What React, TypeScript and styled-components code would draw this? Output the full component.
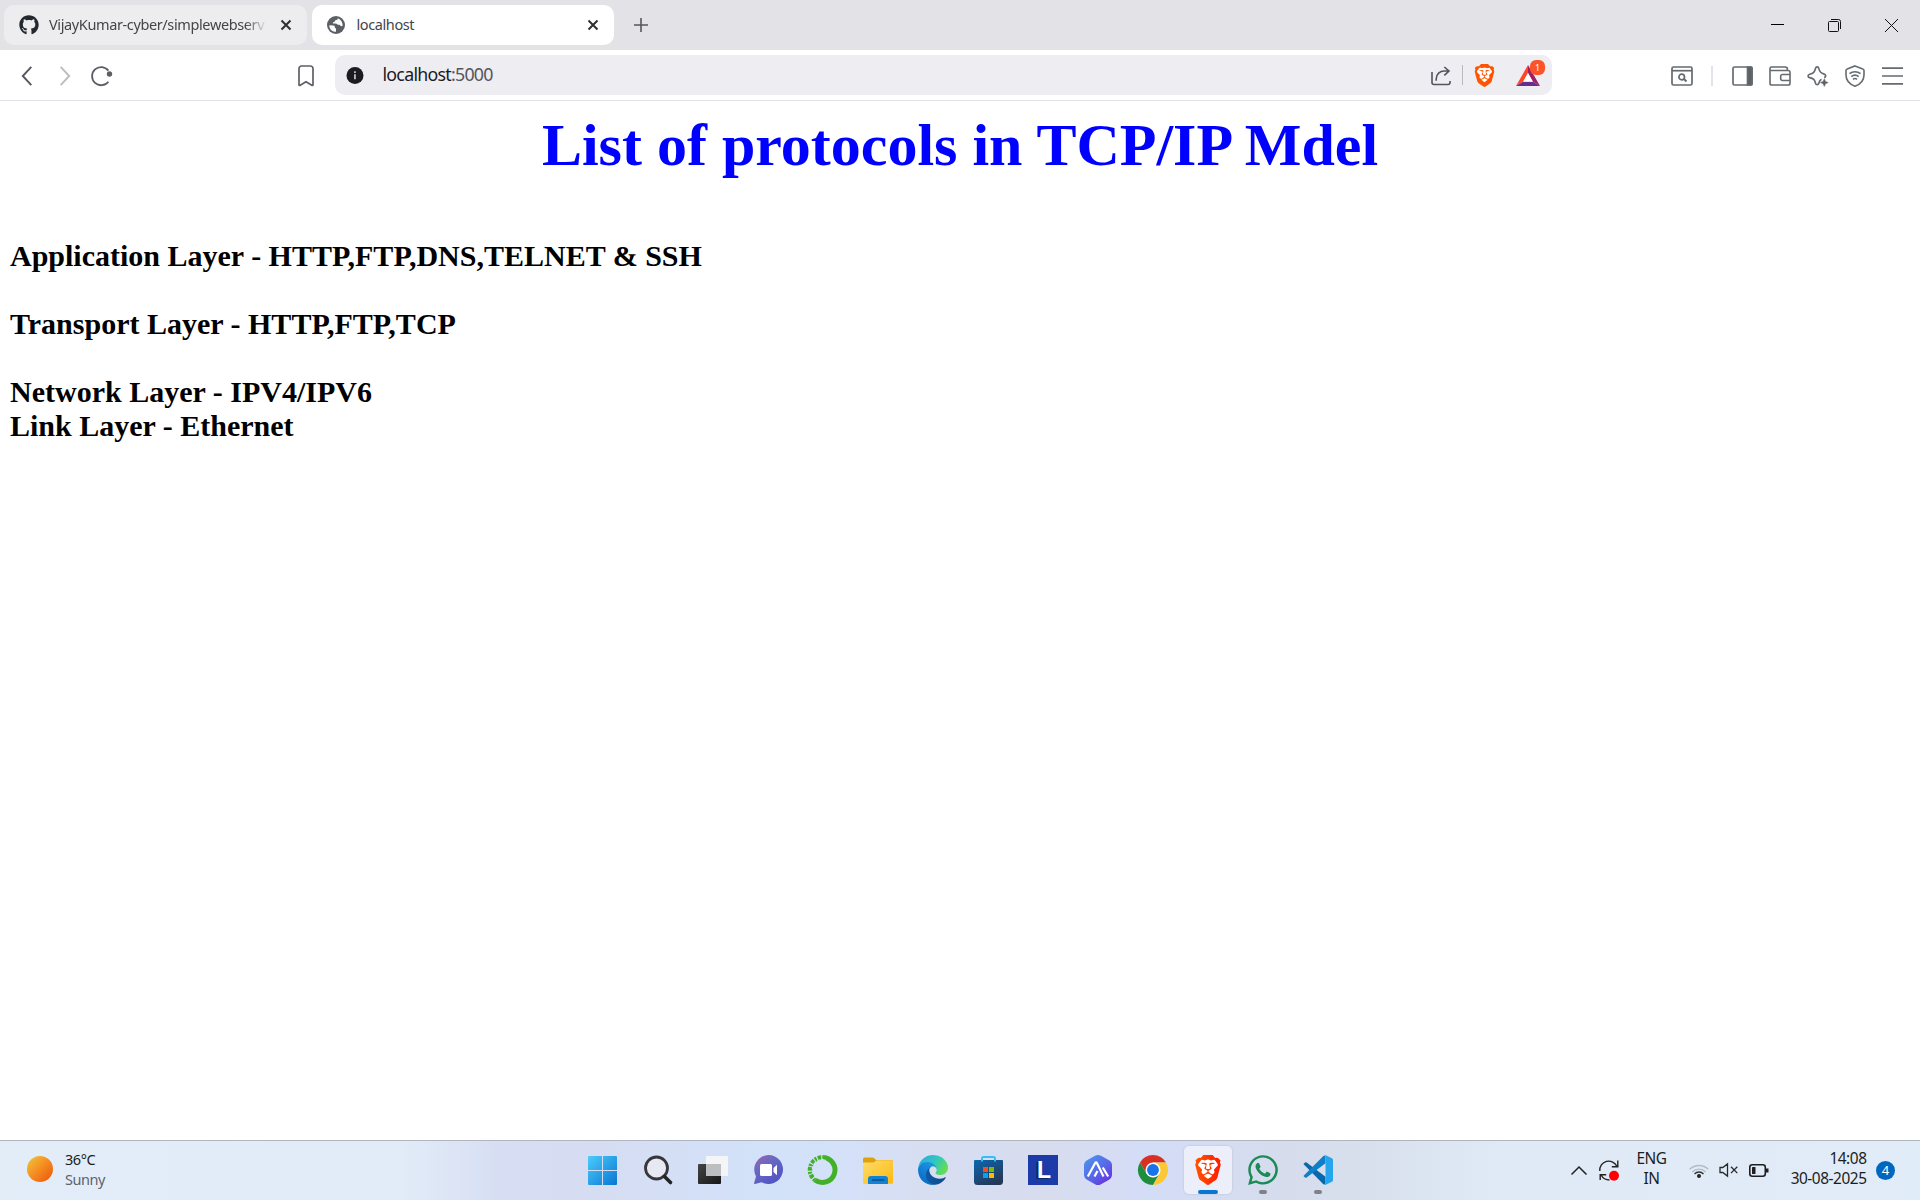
import React from "react";
import styled, { createGlobalStyle } from "styled-components";
import { FaGithub, FaWhatsapp } from "react-icons/fa";
import { SiBrave } from "react-icons/si";

const GlobalStyle = createGlobalStyle`
  * { box-sizing: border-box; }
  html, body { margin: 0; padding: 0; background: #fff; overflow: hidden; }
  svg { display: block; flex: none; overflow: visible; }
`;

const Screen = styled.div`
  width: 1920px;
  height: 1200px;
  display: flex;
  flex-direction: column;
  font-family: "Noto Sans", "Open Sans", sans-serif;
  background: #fff;
`;

const TabStrip = styled.header`
  height: 50px;
  flex: none;
  display: flex;
  align-items: center;
  padding-left: 4px;
  background: #e3e2e7;
`;

const Tab = styled.div<{ $active?: boolean; $width: number }>`
  width: ${(p) => p.$width}px;
  height: 40px;
  margin-right: 5px;
  padding: 0 16px 0 15px;
  display: flex;
  align-items: center;
  border-radius: 10px;
  background: ${(p) => (p.$active ? "#ffffff" : "#ededef")};
  color: #44444a;
`;

const TabTitle = styled.span<{ $fade?: boolean; $spacing: number; $start?: number }>`
  flex: 1;
  min-width: 0;
  margin: 0 14px 0 ${(p) => p.$start ?? 10}px;
  padding-bottom: 2px;
  font-size: 14.5px;
  line-height: 20px;
  letter-spacing: ${(p) => p.$spacing}px;
  white-space: nowrap;
  ${(p) => p.$fade && "mask-image: linear-gradient(90deg, #000 90%, transparent);"}
`;

const NewTab = styled.div`
  width: 44px;
  display: flex;
  justify-content: center;
`;

const WindowControls = styled.div`
  margin-left: auto;
  margin-right: 0.5px;
  display: flex;
`;

const ControlButton = styled.div`
  width: 57px;
  height: 49px;
  display: flex;
  align-items: center;
  justify-content: center;
`;

const Toolbar = styled.nav`
  height: 51px;
  flex: none;
  display: flex;
  align-items: center;
  border-bottom: 1px solid #e2e1e7;
  background: #fff;
  color: #5f6067;
`;

const NavGroup = styled.div`
  width: 335px;
  padding: 0 10px 0 8.5px;
  display: flex;
`;

const ToolCell = styled.div<{ $width?: number; $push?: boolean }>`
  width: ${(p) => p.$width ?? 37.5}px;
  height: 40px;
  padding-top: 1px;
  display: flex;
  align-items: center;
  justify-content: center;
  ${(p) => p.$push && "margin-left: auto;"}
`;

const AddressBar = styled.div`
  width: 1217px;
  height: 40px;
  padding: 0 2.5px 0 11px;
  display: flex;
  align-items: center;
  border-radius: 10px;
  background: #eeedf2;
`;

const Address = styled.span`
  margin-left: 18.5px;
  padding-bottom: 2px;
  flex: 1;
  font-size: 17.8px;
  line-height: 24px;
  letter-spacing: -0.74px;
  color: #1b1a21;
`;

const Port = styled.span`
  color: #55555d;
`;

const Divider = styled.div<{ $width: number; $color: string }>`
  width: ${(p) => p.$width}px;
  height: 20px;
  background: ${(p) => p.$color};
`;

const RewardsIcon = styled.div`
  position: relative;
`;

const RewardsBadge = styled.span`
  position: absolute;
  left: 14px;
  top: -5px;
  width: 15px;
  height: 15px;
  border-radius: 6px;
  background: #fb542b;
  color: #fff;
  font-size: 9px;
  line-height: 15px;
  text-align: center;
`;

const ToolGroup = styled.div`
  margin-left: auto;
  padding-right: 9px;
  display: flex;
`;

const Page = styled.main`
  flex: 1;
  padding: 10px 10px 0;
  font-family: "Liberation Serif", "Times New Roman", serif;
  font-weight: bold;
  color: #000;
`;

const Title = styled.h1`
  margin: 0 0 59px;
  font-size: 60px;
  line-height: 69px;
  text-align: center;
  color: #0000ff;
`;

const Layer = styled.p<{ $gap?: boolean }>`
  margin: 0 0 ${(p) => (p.$gap ? 34 : 0)}px;
  font-size: 30px;
  line-height: 34px;
`;

const Taskbar = styled.footer`
  height: 60px;
  flex: none;
  display: grid;
  grid-template-columns: 575.5px 770px 1fr;
  border-top: 1px solid #afb5c1;
  background: linear-gradient(90deg, #e3edf8 0, #e2ecf8 400px, #d7def3 500px, #d6ddf3 600px, #d2e2f9 770px, #d4e1f8 840px, #d8def1 930px, #d7dcef 1060px, #d4ddf7 1150px, #d6dcec 1290px, #d8e0ed 1370px, #e0eaf6 1500px, #e0ecf8 1920px);
`;

const Weather = styled.div`
  display: flex;
  padding: 8px 0 0 27px;
  gap: 12px;
`;

const Sun = styled.div`
  width: 26px;
  height: 26px;
  margin-top: 7px;
  border-radius: 50%;
  background: linear-gradient(135deg, #f0bd36 10%, #f58b20 50%, #ee6410 85%);
`;

const TextStack = styled.div<{ $align?: string; $width?: number; $size?: number }>`
  ${(p) => p.$width && `width: ${p.$width}px;`}
  text-align: ${(p) => p.$align ?? "left"};
  font-size: ${(p) => p.$size ?? 15.4}px;
  line-height: 20px;
  letter-spacing: -0.45px;
  color: #1b1d20;
  white-space: nowrap;
`;

const Muted = styled.div`
  color: #5e646c;
`;

const Apps = styled.div`
  display: flex;
  align-items: flex-start;
`;

const AppSlot = styled.div`
  position: relative;
  width: 55px;
  height: 58px;
  display: flex;
  align-items: center;
  justify-content: center;
`;

const ActiveTile = styled.div`
  width: 48px;
  height: 48px;
  display: flex;
  align-items: center;
  justify-content: center;
  border-radius: 5px;
  background: #eceffa;
  box-shadow: 0 0 1px 1px rgba(150, 160, 190, 0.18);
`;

const Indicator = styled.div<{ $active?: boolean }>`
  position: absolute;
  bottom: 5px;
  left: 50%;
  width: ${(p) => (p.$active ? 20 : 8)}px;
  height: 4px;
  transform: translateX(-50%);
  border-radius: 2px;
  background: ${(p) => (p.$active ? "#0877d4" : "#7e818a")};
`;

const LetterTile = styled.div`
  width: 30px;
  height: 30px;
  padding-left: 2px;
  display: flex;
  align-items: center;
  justify-content: center;
  background: #1c3ba9;
  color: #fff;
  font: bold 23px/28px "Liberation Sans", sans-serif;
  text-shadow: -2px 1px 0 #0d2668;
`;

const Tray = styled.div`
  display: flex;
  align-items: flex-start;
  justify-content: flex-end;
  padding: 8px 25px 0 0;
`;

const TrayIcon = styled.div<{ $width: number; $right: number }>`
  width: ${(p) => p.$width}px;
  height: 42px;
  margin-right: ${(p) => p.$right}px;
  display: flex;
  align-items: center;
  justify-content: center;
`;

const LanguageSlot = styled.div`
  margin-right: 17px;
`;

const Notices = styled.div`
  width: 19px;
  height: 19px;
  margin: 12px 0 0 9.5px;
  border-radius: 50%;
  background: #0067c0;
  color: #fff;
  font-size: 13px;
  line-height: 18px;
  text-align: center;
`;

const CloseGlyph = () => (
  <svg width="10" height="10" viewBox="0 0 10 10" stroke="#2f2f34" strokeWidth="2" fill="none">
    <path d="M.5.5l9 9M9.5.5l-9 9" />
  </svg>
);

const GlobeIcon = () => (
  <svg width="18" height="18" viewBox="0 0 18 18">
    <circle cx="9" cy="9" r="9" fill="#5d5f66" />
    <path d="M2.3 9.2l4.1.2c1.3.2 1.6 1.2 1.5 2.1.1.8 1.2.6 1.2 1.4l-.2 2.8C5.200 15.800 2.200 13.100 2.300 9.200z" fill="#fff" />
    <path d="M10.800 2.300c-.1 1.500-.9 1.900-2.300 1.900-.9.100-.5 1.300-1.100 1.700-.6.300-1.600.2-1.600 1 .1.700 1.200.6 2.700.6 1.500 0 1.700.9 2.400 1.300 1.200.3 1.900-.2 2.400.7.500.9 1.600.6 2.300.5.200-3.600-1.500-6.500-4.800-7.700z" fill="#fff" />
  </svg>
);

const BackGlyph = ({ forward }: { forward?: boolean }) => (
  <svg width="10" height="20" viewBox="0 0 10 20" fill="none" stroke={forward ? "#bdbdc1" : "#56575e"} strokeWidth="1.9">
    <path d={forward ? "M.7.8L9.200 10 .7 19.200" : "M9.300.8L.8 10l8.500 9.200"} />
  </svg>
);

const ReloadGlyph = () => (
  <svg width="22" height="20" viewBox="0 0 22 20" fill="none" stroke="#5d5e65" strokeWidth="1.8">
    <path d="M17.400 4.600A9.100 9.100 0 1 0 17.400 15.700" />
    <circle cx="18.500" cy="8" r="2.700" fill="#5d5e65" stroke="none" />
  </svg>
);

const BookmarkGlyph = () => (
  <svg width="16" height="22" viewBox="0 0 16 22" fill="none" stroke="#5f6067" strokeWidth="1.700">
    <path d="M1 3.500A2.500 2.500 0 0 1 3.500 1h9A2.500 2.500 0 0 1 15 3.500v16.200c0 .8-.7 1-1.200.6L8 16.800l-5.800 3.500c-.6.400-1.200.2-1.200-.6z" />
  </svg>
);

const InfoGlyph = () => (
  <svg width="18" height="18" viewBox="0 0 18 17">
    <circle cx="9" cy="9" r="8.500" fill="#1c1b22" />
    <path d="M8.100 7.800h1.700v5H8.100zM8.100 4.800h1.700v1.700H8.100z" fill="#c9c8ce" />
  </svg>
);

const ShareGlyph = () => (
  <svg width="20" height="20" viewBox="0 0 20 20" fill="none" stroke="#53545c" strokeWidth="1.600">
    <path d="M1 6v10.500A2 2 0 0 0 3 18.500h14a2 2 0 0 0 2-2V15M5.200 14.800V13c0-5 3.800-8 8-8h4.500M13.300 1l4.700 4-4.700 4.300" />
  </svg>
);

const BraveIcon = ({ size, id }: { size: number; id: string }) => (
  <svg width={size} height={size} viewBox="0 0 24 24">
    <defs>
      <linearGradient id={id}>
        <stop offset="0" stopColor="#ff5500" />
        <stop offset="1" stopColor={id === "brave-large" ? "#ff1a00" : "#ff5000"} />
      </linearGradient>
    </defs>
    <path d="M5 4h14l1.500 4-2.500 9-6 4-6-4L3.500 8z" fill="#fff" />
    <SiBrave width="24" height="24" size={24} fill={`url(#${id})`} />
  </svg>
);

const BatIcon = () => (
  <svg width="24" height="21" viewBox="0 0 24 21">
    <path d="M12 0L0 21l7.500-4.500L12 8z" fill="#ff4724" />
    <path d="M12 0l12 21-7.500-4.500L12 8z" fill="#9e1f63" />
    <path d="M0 21h24l-7.500-4.500h-9z" fill="#662d91" />
    <path d="M12 8l5 8.800H7z" fill="#fff" />
  </svg>
);

const SearchPanelGlyph = () => (
  <svg width="22" height="20" viewBox="0 0 22 20" fill="none" stroke="#666b70" strokeWidth="1.700">
    <rect x="1" y="1" width="20" height="18" rx="1.500" />
    <path d="M1 4.700h20" />
    <circle cx="10.700" cy="11" r="2.800" />
    <path d="M13 13l2.500 2.500" strokeWidth="2" />
  </svg>
);

const SidebarGlyph = () => (
  <svg width="21" height="20" viewBox="0 0 21 20" fill="none" stroke="#666b70" strokeWidth="1.700">
    <rect x="1" y="1" width="19" height="18" rx="1.500" />
    <path d="M15.500 1H19a1 1 0 0 1 1 1v16a1 1 0 0 1-1 1h-3.500z" fill="#5c6166" />
  </svg>
);

const WalletGlyph = () => (
  <svg width="22" height="20" viewBox="0 0 22 20" fill="none" stroke="#666b70" strokeWidth="1.600">
    <path d="M18.500 4.500V3.500c0-1.500-1-2.500-2.500-2.500H2.500A1.500 1.500 0 0 0 1 2.500v14.700A1.800 1.800 0 0 0 2.800 19h16.400a1.800 1.800 0 0 0 1.800-1.800V6.200a1.700 1.700 0 0 0-1.700-1.700H1M21 8.500h-7.500a1.800 1.800 0 0 0-1.800 1.800v2.400a1.800 1.800 0 0 0 1.800 1.800H21" />
  </svg>
);

const SparkleGlyph = () => (
  <svg width="21" height="22" viewBox="0 0 21 22" fill="none" stroke="#666b70" strokeWidth="1.700" strokeLinejoin="round">
    <path d="M14.500 14.200c-1.500.7-2.200 1.800-2.700 4.100-.4 1.900-2.800 1.900-3.300 0-.8-3.700-2-4.800-5.900-5.700-2-.5-2-2.900 0-3.400 3.900-.9 5.100-2 5.900-5.800.5-2 2.900-2 3.300 0 .9 3.800 2 4.900 5.400 5.700 2 .5 2 2.900 0 3.500" />
    <path d="M17.300 13.700l1.200 2.700 2.700 1.200-2.700 1.200-1.200 2.700-1.200-2.700-2.700-1.200 2.700-1.200z" fill="#5c6166" strokeWidth=".5" />
  </svg>
);

const VpnGlyph = () => (
  <svg width="20" height="22" viewBox="0 0 20 22" fill="none" stroke="#666b70" strokeWidth="1.600">
    <path d="M10 .9l7.800 3a1.800 1.800 0 0 1 1.200 1.700V10c0 5.800-4.300 9.500-9 11.200C5.300 19.500 1 15.800 1 10V5.600a1.800 1.800 0 0 1 1.200-1.700z" />
    <path d="M4.500 8.700a8.500 8.500 0 0 1 11 0M6.300 11.600a5.900 5.900 0 0 1 7.400 0M8 14.300a3.300 3.300 0 0 1 4 0" />
  </svg>
);

const MenuGlyph = () => (
  <svg width="21" height="18" viewBox="0 0 21 18" stroke="#666b70" strokeWidth="1.700">
    <path d="M0 1.200h21M0 9h21M0 16.800h21" />
  </svg>
);

const WindowsIcon = () => (
  <svg width="30" height="30" viewBox="0 0 30 30">
    <defs>
      <linearGradient id="win" x1="0" y1="0" x2="1" y2="1">
        <stop offset="0" stopColor="#4cccfb" />
        <stop offset="1" stopColor="#0876d3" />
      </linearGradient>
    </defs>
    <path d="M1 1h13v14H0V2a1 1 0 0 1 1-1zM15 1h13a1 1 0 0 1 1 1v13H15zM0 16h14v14H1a1 1 0 0 1-1-1zM15 16h14v13a1 1 0 0 1-1 1H15z" fill="url(#win)" />
  </svg>
);

const SearchIcon = () => (
  <svg width="28" height="28" viewBox="0 0 28 28" fill="none">
    <circle cx="12.500" cy="12" r="11" stroke="#36373b" strokeWidth="2.800" fill="#e6e9f2" />
    <path d="M20.500 20.500l6 6" stroke="#232427" strokeWidth="3.600" strokeLinecap="round" />
  </svg>
);

const TaskViewIcon = () => (
  <svg width="30" height="28" viewBox="0 0 30 28">
    <defs>
      <linearGradient id="tvd" x1="0" y1="0" x2="1" y2="1">
        <stop offset="0" stopColor="#444" />
        <stop offset="1" stopColor="#171717" />
      </linearGradient>
    </defs>
    <rect y="8" width="23" height="20" rx="1" fill="url(#tvd)" />
    <rect x="8" width="22" height="20" rx="1" fill="#f4f5f6" />
    <path d="M8 8h15v12H8z" fill="#bcbec0" />
  </svg>
);

const ChatIcon = () => (
  <svg width="29" height="30" viewBox="0 0 29 30">
    <defs>
      <linearGradient id="chat" x1="0" y1="0" x2=".7" y2="1">
        <stop offset="0" stopColor="#a161ae" />
        <stop offset=".4" stopColor="#6969c2" />
        <stop offset="1" stopColor="#5054c4" />
      </linearGradient>
    </defs>
    <path d="M14.500 0a14.500 14.500 0 1 1-7 27.200L1 29c-.8.200-1.100-.5-.8-1.200L2 21.500A14.500 14.500 0 0 1 14.500 0z" fill="url(#chat)" />
    <rect x="6" y="9" width="12" height="12" rx="1.500" fill="#fff" />
    <path d="M19.500 13l3.500-3.200v10.400l-3.500-3.200z" fill="#fff" />
  </svg>
);

const AnacondaIcon = () => (
  <svg width="30" height="30" viewBox="0 0 30 30" fill="none" stroke="#43b02a">
    <path d="M15 2.500A12.500 12.500 0 1 1 7 25" strokeWidth="5" />
    <path d="M7 25A12.500 12.500 0 0 1 15 2.500" strokeWidth="4.500" strokeDasharray="2 1.200 3.500 1" />
    <path d="M8.500 23A10.300 10.300 0 0 1 14 4.500" strokeWidth="1.200" stroke="#d4e2f8" strokeDasharray="3 2" />
    <path d="M13 4.200l5 1.300" strokeWidth="1.200" stroke="#d4e2f8" />
  </svg>
);

const FolderIcon = () => (
  <svg width="30" height="27" viewBox="0 0 30 27">
    <defs>
      <linearGradient id="fold" x1="0" y1="0" x2="1" y2="1">
        <stop offset="0" stopColor="#ffdc6a" />
        <stop offset="1" stopColor="#fcb912" />
      </linearGradient>
    </defs>
    <path d="M0 8V2a1.500 1.500 0 0 1 1.500-1.500H10c1.500 0 2 2.500 3.500 2.500h15A1.500 1.500 0 0 1 30 4.500V8z" fill="#dfa00d" />
    <path d="M0 5.500h10.500c1.500 0 2-2.200 3.500-2.200h14.500a1.500 1.500 0 0 1 1.500 1.500V25.500a1.200 1.200 0 0 1-1.200 1.200H1.200A1.200 1.200 0 0 1 0 25.500z" fill="url(#fold)" />
    <path d="M5 27v-5a3 3 0 0 1 3-3h14a3 3 0 0 1 3 3v5z" fill="#1283d2" />
    <rect x="9" y="22.300" width="12.500" height="1.500" fill="#0a4f91" />
  </svg>
);

const EdgeIcon = () => (
  <svg width="30" height="30" viewBox="0 0 256 256">
    <defs>
      <linearGradient id="ea" x1=".1" x2="1"><stop stopColor="#0c59a4" /><stop offset="1" stopColor="#124a8c" /></linearGradient>
      <linearGradient id="eb" x1=".8" y1="0" x2=".2" y2="1"><stop stopColor="#1b9de2" /><stop offset=".5" stopColor="#1680d6" /><stop offset="1" stopColor="#0669bf" /></linearGradient>
      <linearGradient id="ec" x1="0" y1=".2" x2="1" y2=".65"><stop stopColor="#2fa9df" /><stop offset=".5" stopColor="#30c6c3" /><stop offset="1" stopColor="#65df4b" /></linearGradient>
    </defs>
    <path fill="url(#ea)" d="M231.100 190.500c-3.400 1.800-6.900 3.400-10.500 4.700a101.700 101.700 0 0 1-35.900 6.500c-47.300 0-88.500-32.500-88.500-74.300a31.500 31.500 0 0 1 16.400-27.300c-42.800 1.800-53.800 46.400-53.800 72.500 0 74 68.100 81.400 82.800 81.400 7.900 0 19.800-2.300 27-4.600l1.300-.4a128.300 128.300 0 0 0 66.600-52.800 4 4 0 0 0-5.400-5.700z" />
    <path fill="url(#eb)" d="M105.700 241.400a79.200 79.200 0 0 1-22.700-21.300 80.700 80.700 0 0 1 29.500-120c3.200-1.500 8.500-4.100 15.600-4a32.400 32.400 0 0 1 25.700 13 31.900 31.900 0 0 1 6.300 18.700c0-.2 24.500-79.600-80-79.600-43.900 0-80 41.700-80 78.200a130.200 130.200 0 0 0 12.100 56 128 128 0 0 0 156.400 67 75.500 75.500 0 0 1-62.800-8z" />
    <path fill="url(#ec)" d="M152.300 148.900c-.9 1-3.400 2.500-3.400 5.600 0 2.600 1.700 5.200 4.800 7.300 14.300 10 41.400 8.600 41.500 8.600a59.600 59.600 0 0 0 30.300-8.300 61.400 61.400 0 0 0 30.400-52.900c.3-22.400-8-37.300-11.300-43.900C223.500 23.900 177.700 0 128 0A128 128 0 0 0 0 126.200c.5-36.500 36.800-66 80-66 3.500 0 23.500.3 42 10 16.300 8.600 24.900 19 30.800 29.200 6.200 10.700 7.300 24.100 7.300 29.500s-2.700 13.300-7.800 20z" />
  </svg>
);

const StoreIcon = () => (
  <svg width="29" height="30" viewBox="0 0 29 30">
    <defs>
      <linearGradient id="store" x1="0" y1="0" x2=".6" y2="1"><stop stopColor="#0c67b1" /><stop offset="1" stopColor="#253858" /></linearGradient>
    </defs>
    <path d="M0 6a1 1 0 0 1 1-1h27a1 1 0 0 1 1 1v20.500a3.500 3.500 0 0 1-3.500 3.500h-22A3.500 3.500 0 0 1 0 26.500z" fill="url(#store)" />
    <path d="M8 6.500V3.500A1.500 1.500 0 0 1 9.500 2h10A1.500 1.500 0 0 1 21 3.500V6.500" fill="none" stroke="#37bff3" strokeWidth="2" />
    <path d="M9 12h5v5H9z" fill="#f25022" />
    <path d="M15 12h5v5h-5z" fill="#7fba00" />
    <path d="M9 18h5v5H9z" fill="#00a4ef" />
    <path d="M15 18h5v5h-5z" fill="#ffb900" />
  </svg>
);

const HexIcon = () => (
  <svg width="28" height="30" viewBox="0 0 28 30">
    <defs>
      <linearGradient id="hex" x1="0" y1="0" x2=".8" y2="1"><stop stopColor="#4b9bed" /><stop offset=".6" stopColor="#5866e8" /><stop offset="1" stopColor="#692fe3" /></linearGradient>
    </defs>
    <path d="M11 .8a6 6 0 0 1 6 0l8 4.500a6 6 0 0 1 3 5.200v9a6 6 0 0 1-3 5.200l-8 4.500a6 6 0 0 1-6 0l-8-4.500a6 6 0 0 1-3-5.200v-9a6 6 0 0 1 3-5.200z" fill="url(#hex)" />
    <path d="M3.800 21.500L11.200 8c.4-.8 1.300-.8 1.700 0l6.600 13.500M10.500 21.500l3-5.500M18.800 12.500l5.400 9" fill="none" stroke="#fff" strokeWidth="2.200" />
  </svg>
);

const ChromeIcon = () => (
  <svg width="30" height="30" viewBox="0 0 48 48">
    <path d="M24 12h20.800A24 24 0 0 0 3.200 12L13.600 30z" fill="#d93025" />
    <path d="M3.200 12A24 24 0 0 0 24 48l10.400-18L13.600 30z" fill="#1e8e3e" />
    <path d="M24 12h20.800A24 24 0 0 1 24 48l10.400-18z" fill="#fcc934" />
    <circle cx="24" cy="24" r="12" fill="#fff" />
    <circle cx="24" cy="24" r="9.500" fill="#1a73e8" />
  </svg>
);

const CodeIcon = () => (
  <svg width="30" height="30" viewBox="0 0 24 24">
    <path fill="#0868ab" d="M.33 7.260L1.650 6.060a1 1 0 0 1 1.270-.060L18 17.450v5.500L16.500 23.500z" />
    <path fill="#0f7fc9" d="M.33 16.740l1.320 1.200a1 1 0 0 0 1.270.060L18 6.550V1L16.500.5z" />
    <path fill="#26a5ee" d="M16.500.5A1.500 1.500 0 0 1 18.200.2l4.950 2.387A1.500 1.500 0 0 1 24 3.939V20.060a1.500 1.500 0 0 1-.848 1.352L18.200 23.800a1.500 1.500 0 0 1-1.700-.3c.6.400 1.500.1 1.500-.9V1.500c0-1-.9-1.400-1.500-1z" />
  </svg>
);

const ChevronGlyph = () => (
  <svg width="16" height="9" viewBox="0 0 16 9" fill="none" stroke="#222" strokeWidth="1.500">
    <path d="M.5 8.500L8 1l7.500 7.500" />
  </svg>
);

const SyncGlyph = () => (
  <svg width="20" height="21" viewBox="0 0 20 21" fill="none" stroke="#222" strokeWidth="1.400">
    <path d="M.8 11A9 9 0 0 1 18 6.500M18.800.5v6.300h-6M1.200 20v-5.300h6M2 15c2 3.500 5 5 8.500 5" />
    <circle cx="15" cy="15.700" r="5" fill="#ff0000" stroke="none" />
  </svg>
);

const WifiGlyph = () => (
  <svg width="20" height="15" viewBox="0 0 20 15" fill="none" strokeWidth="1.400">
    <path d="M.7 6.300a13.200 13.200 0 0 1 18.600 0M3.300 8.900a9.500 9.500 0 0 1 13.400 0" stroke="#b2bbc6" />
    <path d="M5.500 10.900a6.400 6.400 0 0 1 9 0" stroke="#333" />
    <circle cx="10" cy="13" r="2" fill="#222" />
  </svg>
);

const MuteGlyph = () => (
  <svg width="19" height="14" viewBox="0 0 19 14" fill="none" stroke="#2a2a2d" strokeWidth="1.300">
    <path d="M1 4.500h2.800L8.500.9v12.200L3.800 9.500H1zM12 3.800l6.300 6.300M18.300 3.800L12 10.100" />
  </svg>
);

const BatteryGlyph = () => (
  <svg width="20" height="13" viewBox="0 0 20 13" fill="none" stroke="#1f1f22" strokeWidth="1.600">
    <rect x=".8" y=".8" width="15.500" height="11.400" rx="2.500" />
    <rect x="3" y="3" width="3.500" height="7" rx=".6" fill="#1f1f22" stroke="none" />
    <path d="M18 4.500v4" strokeWidth="3" />
  </svg>
);

const apps: { name: string; icon: React.ReactNode; state?: "active" | "open" }[] = [
  { name: "start", icon: <WindowsIcon /> },
  { name: "search", icon: <SearchIcon /> },
  { name: "task-view", icon: <TaskViewIcon /> },
  { name: "chat", icon: <ChatIcon /> },
  { name: "anaconda", icon: <AnacondaIcon /> },
  { name: "explorer", icon: <FolderIcon /> },
  { name: "edge", icon: <EdgeIcon /> },
  { name: "store", icon: <StoreIcon /> },
  { name: "letter", icon: <LetterTile>L</LetterTile> },
  { name: "hex", icon: <HexIcon /> },
  { name: "chrome", icon: <ChromeIcon /> },
  { name: "brave", icon: <BraveIcon size={30} id="brave-large" />, state: "active" },
  { name: "whatsapp", icon: <FaWhatsapp size={34} color="#1c8a55" />, state: "open" },
  { name: "code", icon: <CodeIcon />, state: "open" },
];

const layers = [
  { text: "Application Layer - HTTP,FTP,DNS,TELNET & SSH", gap: true },
  { text: "Transport Layer - HTTP,FTP,TCP", gap: true },
  { text: "Network Layer - IPV4/IPV6", gap: false },
  { text: "Link Layer - Ethernet", gap: false },
];

export default function App() {
  return (
    <Screen>
      <GlobalStyle />
      <TabStrip>
        <Tab $width={303}>
          <FaGithub size={20} color="#24292f" />
          <TabTitle $fade $spacing={-0.38}>VijayKumar-cyber/simplewebserv</TabTitle>
          <CloseGlyph />
        </Tab>
        <Tab $active $width={302}>
          <GlobeIcon />
          <TabTitle $spacing={-0.4} $start={11.5}>localhost</TabTitle>
          <CloseGlyph />
        </Tab>
        <NewTab>
          <svg width="14" height="14" viewBox="0 0 14 14" stroke="#56565c" strokeWidth="1.600">
            <path d="M0 7h14M7 0v14" />
          </svg>
        </NewTab>
        <WindowControls>
          <ControlButton>
            <svg width="13" height="13" viewBox="0 0 13 13" stroke="#000"><path d="M0 5.500h13" /></svg>
          </ControlButton>
          <ControlButton>
            <svg width="13" height="13" viewBox="0 0 13 13" fill="none" stroke="#111">
              <rect x=".5" y="2.500" width="10" height="10" rx="1" />
              <path d="M3 .5h7.500a2 2 0 0 1 2 2V10" />
            </svg>
          </ControlButton>
          <ControlButton>
            <svg width="13" height="13" viewBox="0 0 13 13" stroke="#111"><path d="M0 0l13 13M13 0L0 13" /></svg>
          </ControlButton>
        </WindowControls>
      </TabStrip>

      <Toolbar>
        <NavGroup>
          <ToolCell><BackGlyph /></ToolCell>
          <ToolCell><BackGlyph forward /></ToolCell>
          <ToolCell><ReloadGlyph /></ToolCell>
          <ToolCell $push><BookmarkGlyph /></ToolCell>
        </NavGroup>
        <AddressBar>
          <InfoGlyph />
          <Address>localhost<Port>:5000</Port></Address>
          <ToolCell $width={42}><ShareGlyph /></ToolCell>
          <Divider $width={1} $color="#b9b9c0" />
          <ToolCell $width={44}><BraveIcon size={23} id="brave-small" /></ToolCell>
          <ToolCell $width={43}>
            <RewardsIcon>
              <BatIcon />
              <RewardsBadge>1</RewardsBadge>
            </RewardsIcon>
          </ToolCell>
        </AddressBar>
        <ToolGroup>
          <ToolCell><SearchPanelGlyph /></ToolCell>
          <ToolCell $width={22.5}><Divider $width={2} $color="#e4e3e9" /></ToolCell>
          <ToolCell><SidebarGlyph /></ToolCell>
          <ToolCell><WalletGlyph /></ToolCell>
          <ToolCell><SparkleGlyph /></ToolCell>
          <ToolCell><VpnGlyph /></ToolCell>
          <ToolCell><MenuGlyph /></ToolCell>
        </ToolGroup>
      </Toolbar>

      <Page>
        <Title>List of protocols in TCP/IP Mdel</Title>
        {layers.map((l) => (
          <Layer key={l.text} $gap={l.gap}>{l.text}</Layer>
        ))}
      </Page>

      <Taskbar>
        <Weather>
          <Sun />
          <TextStack $size={14.5}>
            <div>36°C</div>
            <Muted>Sunny</Muted>
          </TextStack>
        </Weather>
        <Apps>
          {apps.map((a) => (
            <AppSlot key={a.name}>
              {a.state === "active" ? <ActiveTile>{a.icon}</ActiveTile> : a.icon}
              {a.state && <Indicator $active={a.state === "active"} />}
            </AppSlot>
          ))}
        </Apps>
        <Tray>
          <TrayIcon $width={16} $right={12}><ChevronGlyph /></TrayIcon>
          <TrayIcon $width={20} $right={13}><SyncGlyph /></TrayIcon>
          <LanguageSlot>
            <TextStack $align="center" $width={40}>
              <div>ENG</div>
              <div>IN</div>
            </TextStack>
          </LanguageSlot>
          <TrayIcon $width={20} $right={10}><WifiGlyph /></TrayIcon>
          <TrayIcon $width={19} $right={11}><MuteGlyph /></TrayIcon>
          <TrayIcon $width={20} $right={0}><BatteryGlyph /></TrayIcon>
          <TextStack $align="right" $width={98}>
            <div>14:08</div>
            <div>30-08-2025</div>
          </TextStack>
          <Notices>4</Notices>
        </Tray>
      </Taskbar>
    </Screen>
  );
}
